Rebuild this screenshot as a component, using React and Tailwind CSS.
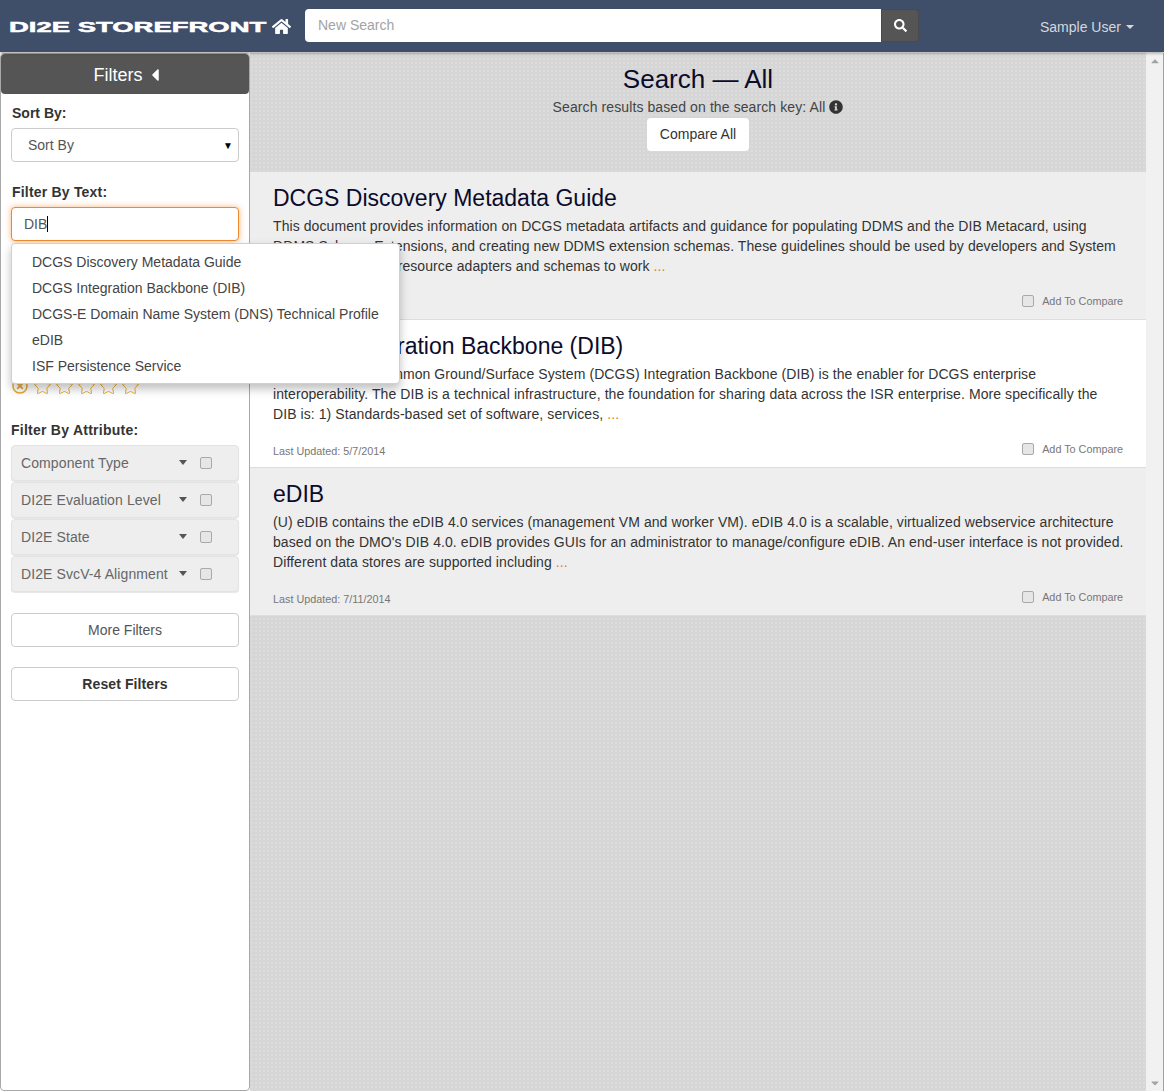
import { FaHome, FaSearch, FaInfoCircle, FaCaretLeft, FaCaretDown, FaCaretUp, FaRegTimesCircle } from 'react-icons/fa';
import { Star } from 'lucide-react';

const suggestions = [
  'DCGS Discovery Metadata Guide',
  'DCGS Integration Backbone (DIB)',
  'DCGS-E Domain Name System (DNS) Technical Profile',
  'eDIB',
  'ISF Persistence Service',
];

const attributes = ['Component Type', 'DI2E Evaluation Level', 'DI2E State', 'DI2E SvcV-4 Alignment'];

const results = [
  {
    title: 'DCGS Discovery Metadata Guide',
    text: 'This document provides information on DCGS metadata artifacts and guidance for populating DDMS and the DIB Metacard, using\nDDMS Schema Extensions, and creating new DDMS extension schemas. These guidelines should be used by developers and System\nIntegrators building resource adapters and schemas to work',
    updated: '5/7/2014',
    bg: 'bg-[#eeeeee]',
  },
  {
    title: 'DCGS Integration Backbone (DIB)',
    text: 'The Distributed Common Ground/Surface System (DCGS) Integration Backbone (DIB) is the enabler for DCGS enterprise\ninteroperability. The DIB is a technical infrastructure, the foundation for sharing data across the ISR enterprise. More specifically the\nDIB is: 1) Standards-based set of software, services,',
    updated: '5/7/2014',
    bg: 'bg-white',
  },
  {
    title: 'eDIB',
    text: "(U) eDIB contains the eDIB 4.0 services (management VM and worker VM). eDIB 4.0 is a scalable, virtualized webservice architecture\nbased on the DMO's DIB 4.0. eDIB provides GUIs for an administrator to manage/configure eDIB. An end-user interface is not provided.\nDifferent data stores are supported including",
    updated: '7/11/2014',
    bg: 'bg-[#eeeeee]',
  },
];

function Checkbox() {
  return <span className="block w-[12px] h-[12px] rounded-[2px] border border-[#a9a9a9] bg-[#e6e6e6]" />;
}

function SelectBox({ label }) {
  return (
    <div className="h-[34px] border border-[#cccccc] rounded-[4px] bg-white flex items-center justify-between pl-[16px] pr-[5px] text-[#555555]">
      <span>{label}</span>
      <span className="text-black text-[10px]">▼</span>
    </div>
  );
}

function Sidebar() {
  return (
    <aside className="w-[250px] shrink-0 bg-white border border-[#a8a8a8] rounded-[4px] relative z-10">
      <div className="h-[40px] bg-[#555555] rounded-[4px] flex items-center justify-center gap-[2px] pl-[8px] pt-[2px] text-white text-[18px]">
        Filters <FaCaretLeft className="text-[20px]" />
      </div>
      <div className="px-[10px]">
        <div className="mt-[9px] font-bold text-[#333333] leading-[20px] pl-px">Sort By:</div>
        <div className="mt-[5px]"><SelectBox label="Sort By" /></div>

        <div className="mt-[20px] font-bold text-[#333333] leading-[20px] pl-px tracking-[0.2px]">Filter By Text:</div>
        <div className="relative mt-[5px]">
          <div className="h-[34px] border border-[#f0892c] rounded-[4px] bg-white flex items-center pl-[12px] text-[#555555] shadow-[0_0_6px_rgba(240,137,44,0.6)]">
            DIB<span className="w-px h-[16px] bg-black" />
          </div>
          <ul className="absolute left-0 top-[36px] w-[389px] h-[141px] z-20 bg-white border border-[#d0d0d0] rounded-[4px] shadow-[0_5px_10px_rgba(0,0,0,0.25)] pt-[5px] text-[#444444]">
            {suggestions.map((s) => (
              <li key={s} className="h-[26px] leading-[26px] pl-[20px]">{s}</li>
            ))}
          </ul>
        </div>

        <div className="mt-[33px] font-bold text-[#333333] leading-[20px]">Filter By Tag:</div>
        <div className="mt-[4px]"><SelectBox label="Tags" /></div>

        <div className="mt-[23px] font-bold text-[#333333] leading-[20px]">Filter By Rating:</div>
        <div className="flex items-center mt-[1px] h-[20px] text-[#e8a92c] pl-[1px]">
          <FaRegTimesCircle className="text-[16px]" />
          <span className="flex gap-[3px] ml-[5px]">
            <Star size={19} strokeWidth={1.2} />
            <Star size={19} strokeWidth={1.2} />
            <Star size={19} strokeWidth={1.2} />
            <Star size={19} strokeWidth={1.2} />
            <Star size={19} strokeWidth={1.2} />
          </span>
        </div>

        <div className="mt-[24px] font-bold text-[#333333] leading-[20px] tracking-[0.25px]">Filter By Attribute:</div>
        <div className="mt-[5px] flex flex-col gap-px">
          {attributes.map((a) => (
            <div key={a} className="h-[36px] bg-[#eeeeee] rounded-[4px] border border-[#e3e3e3] shadow-[0_1px_1px_rgba(0,0,0,0.1)] flex items-center pl-[9px] text-[#666666]">
              <span className="w-[158px] whitespace-nowrap tracking-[0.1px]">{a}</span>
              <span className="w-0 h-0 border-x-[4px] border-x-transparent border-t-[5px] border-t-[#555555] -mt-[2px]" />
              <span className="ml-[13px]"><Checkbox /></span>
            </div>
          ))}
        </div>

        <button className="mt-[21px] w-full h-[34px] border border-[#cccccc] rounded-[4px] bg-white text-[#555555]">More Filters</button>
        <button className="mt-[20px] w-full h-[34px] border border-[#cccccc] rounded-[4px] bg-white text-[#333333] font-bold tracking-[0.1px]">Reset Filters</button>
      </div>
    </aside>
  );
}

function ResultCard({ title, text, updated, bg }) {
  return (
    <div className={`${bg} h-[148px] border-b border-[#dddddd] pl-[23px] pr-[20px] pt-[10px] flex flex-col`}>
      <h2 className="text-[23px] leading-[32px] text-[#0b0b2b]">{title}</h2>
      <p className="mt-[2px] leading-[20px] text-[#333333] tracking-[0.08px] whitespace-pre-line">
        {text} <span className="text-[#d9822b]">...</span>
      </p>
      <div className="mt-auto mb-[8px] pr-[3px] flex items-center justify-between text-[10.8px] text-[#777777]">
        <span className="mt-[3px]">Last Updated: {updated}</span>
        <span className="flex items-center gap-[8px]"><Checkbox />Add To Compare</span>
      </div>
    </div>
  );
}

export default function App() {
  return (
    <div className="h-[1091px] overflow-hidden flex flex-col text-[14px] font-['Liberation_Sans',Arial,sans-serif]">
      <header className="h-[52px] shrink-0 bg-[#3f4f69] flex items-center relative z-20 shadow-[0_1px_3px_rgba(0,0,0,0.4)]">
        <div className="w-[305px] shrink-0 flex items-center pl-[9px]">
          <span className="w-[263px] whitespace-nowrap text-white text-[15px] font-bold leading-none scale-x-[1.83] origin-left [-webkit-text-stroke:0.5px_white]">
            <span className="inline-block w-[134px]">DI2E STOREFRONT</span>
          </span>
          <FaHome className="text-white text-[19px]" />
        </div>
        <div className="w-[576px] h-[33px] mb-px bg-white rounded-l-[4px] flex items-center pl-[13px] text-[#a3a3a3]">New Search</div>
        <div className="w-[38px] h-[33px] mb-px bg-[#555555] rounded-r-[4px] flex items-center justify-center text-white border border-[#4a4a4a]">
          <FaSearch className="text-[13px]" />
        </div>
        <div className="ml-[121px] mt-[2px] flex items-center gap-[5px] text-[#d4d8de]">
          Sample User <span className="w-0 h-0 border-x-[4px] border-x-transparent border-t-[4px] border-t-[#d4d8de]" />
        </div>
      </header>

      <div className="flex flex-1 min-h-0 pt-px">
        <Sidebar />
        <main className="flex-1 bg-[#d6d6d6] bg-[radial-gradient(#dcdcdc_1px,transparent_1px)] bg-[length:4px_4px]">
          <div className="h-[119px] flex flex-col items-center pt-[11px]">
            <h1 className="text-[26px] leading-[30px] text-[#0b0b2b]">Search — All</h1>
            <div className="mt-[3px] leading-[20px] text-[#444444] flex items-center gap-[4px] tracking-[0.1px]">
              Search results based on the search key: All <FaInfoCircle className="text-[#333333] text-[14px]" />
            </div>
            <button className="mt-[1px] h-[33px] w-[102px] bg-white rounded-[4px] text-[#333333]">Compare All</button>
          </div>
          {results.map((r) => (
            <ResultCard key={r.title} {...r} />
          ))}
        </main>
        <div className="w-[18px] shrink-0 bg-[#f1f1f1] border-r border-[#a0a0a0] flex flex-col items-center justify-between text-[#a3a3a3] text-[12px] py-[2px]">
          <FaCaretUp />
          <FaCaretDown />
        </div>
      </div>
    </div>
  );
}
